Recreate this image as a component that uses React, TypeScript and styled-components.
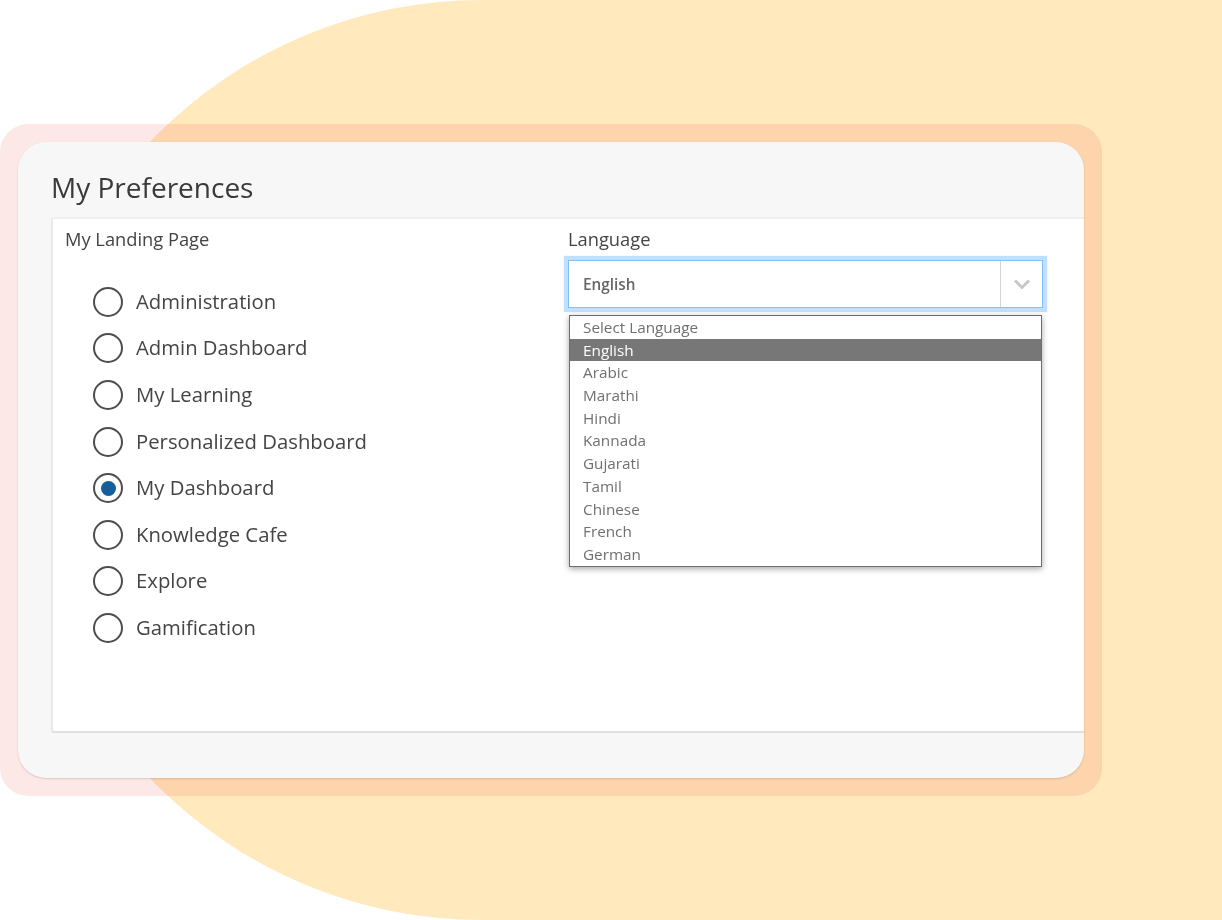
import React from 'react';
import styled, { createGlobalStyle } from 'styled-components';

const LANDING_PAGES = [
  'Administration',
  'Admin Dashboard',
  'My Learning',
  'Personalized Dashboard',
  'My Dashboard',
  'Knowledge Cafe',
  'Explore',
  'Gamification',
];

const LANGUAGES = [
  'Select Language',
  'English',
  'Arabic',
  'Marathi',
  'Hindi',
  'Kannada',
  'Gujarati',
  'Tamil',
  'Chinese',
  'French',
  'German',
];

const GlobalStyle = createGlobalStyle`
  html, body {
    margin: 0;
    padding: 0;
    background: #fff;
    overflow: hidden;
  }
  * {
    box-sizing: border-box;
  }
`;

const Page = styled.div`
  position: relative;
  width: 1222px;
  height: 920px;
  padding-top: 124px;
  overflow: hidden;
  font-family: 'Open Sans', 'Noto Sans', sans-serif;

  &::before {
    content: '';
    position: absolute;
    top: 0;
    left: 22px;
    width: 1200px;
    height: 920px;
    border-radius: 460px 0 0 460px;
    background: #ffe9bd;
  }
`;

const TintPanel = styled.div`
  position: relative;
  width: 1102px;
  height: 672px;
  padding: 18px;

  &::before {
    content: '';
    position: absolute;
    inset: 0;
    border-radius: 28px;
    background: #fde8e8;
    mix-blend-mode: multiply;
  }
`;

const Card = styled.section`
  position: relative;
  display: flex;
  flex-direction: column;
  height: 100%;
  padding: 25px 0 45px 33px;
  border-radius: 28px;
  background: #f7f7f7;
  box-shadow: 0 1px 2px rgba(120, 100, 80, 0.25);
  overflow: hidden;
`;

const Title = styled.h1`
  margin: 0 0 10px;
  font-size: 28px;
  font-weight: 400;
  line-height: 40px;
  color: #3a3a3a;
`;

const Box = styled.div`
  flex: 1;
  display: grid;
  grid-template-columns: 515px 1fr;
  border: 2px solid #e8e8e8;
  border-top-color: #eeeeee;
  border-bottom-color: #e0e0e0;
  border-right: none;
  border-radius: 3px 0 0 3px;
  background: #fff;
`;

const LandingColumn = styled.div`
  padding: 7px 0 0 12px;
`;

const FieldLabel = styled.div`
  font-size: 18.3px;
  line-height: 26px;
  color: #444;
`;

const RadioList = styled.ul`
  list-style: none;
  margin: 26.5px 0 0;
  padding: 0 0 0 28px;
`;

const RadioRow = styled.li`
  display: flex;
  align-items: center;
  gap: 13px;
  height: 46.6px;
  font-size: 20.3px;
  color: #444;
`;

const RadioText = styled.span`
  margin-bottom: 2px;
`;

const RadioCircle = styled.span<{ $checked?: boolean }>`
  flex: none;
  display: flex;
  align-items: center;
  justify-content: center;
  width: 30px;
  height: 30px;
  border: 2px solid #4d4d4d;
  border-radius: 50%;
  background: #fff;

  &::after {
    content: '';
    display: ${(p) => (p.$checked ? 'block' : 'none')};
    width: 15px;
    height: 15px;
    border-radius: 50%;
    background: #155f9c;
  }
`;

const LanguageColumn = styled.div`
  padding: 7px 0 0;
  width: 475px;
`;

const SelectBox = styled.div`
  display: flex;
  align-items: stretch;
  height: 48px;
  margin-top: 8px;
  border: 1px solid #80c0f8;
  box-shadow: 0 0 1px 4px #bfe0ff;
  background: #fff;
`;

const SelectValue = styled.div`
  flex: 1;
  display: flex;
  align-items: center;
  padding-left: 14px;
  font-size: 15.3px;
  font-weight: 600;
  color: #666;
`;

const SelectArrow = styled.div`
  flex: none;
  display: flex;
  align-items: center;
  justify-content: center;
  width: 42px;
  border-left: 1px solid #d4d4d4;
  color: #c8c8c8;
`;

const OptionList = styled.ul`
  list-style: none;
  width: 473px;
  margin: 7px 0 0 1px;
  padding: 0;
  border: 1px solid #6e6e6e;
  background: #fff;
  box-shadow: 0 2px 6px rgba(0, 0, 0, 0.35);
`;

const Option = styled.li<{ $selected?: boolean }>`
  height: 22.7px;
  padding-left: 13px;
  font-size: 15.3px;
  line-height: 22.7px;
  white-space: nowrap;
  color: ${(p) => (p.$selected ? '#fff' : '#707070')};
  background: ${(p) => (p.$selected ? '#777' : 'transparent')};
`;

export default function App() {
  return (
    <Page>
      <GlobalStyle />
      <TintPanel>
        <Card>
          <Title>My Preferences</Title>
          <Box>
            <LandingColumn>
              <FieldLabel>My Landing Page</FieldLabel>
              <RadioList>
                {LANDING_PAGES.map((name) => (
                  <RadioRow key={name}>
                    <RadioCircle $checked={name === 'My Dashboard'} />
                    <RadioText>{name}</RadioText>
                  </RadioRow>
                ))}
              </RadioList>
            </LandingColumn>
            <LanguageColumn>
              <FieldLabel>Language</FieldLabel>
              <SelectBox>
                <SelectValue>English</SelectValue>
                <SelectArrow>
                  <svg width="18" height="11" viewBox="0 0 18 11" fill="none">
                    <path d="M2 1.5l7 7 7-7" stroke="currentColor" strokeWidth="3" />
                  </svg>
                </SelectArrow>
              </SelectBox>
              <OptionList>
                {LANGUAGES.map((lang) => (
                  <Option key={lang} $selected={lang === 'English'}>
                    {lang}
                  </Option>
                ))}
              </OptionList>
            </LanguageColumn>
          </Box>
        </Card>
      </TintPanel>
    </Page>
  );
}
